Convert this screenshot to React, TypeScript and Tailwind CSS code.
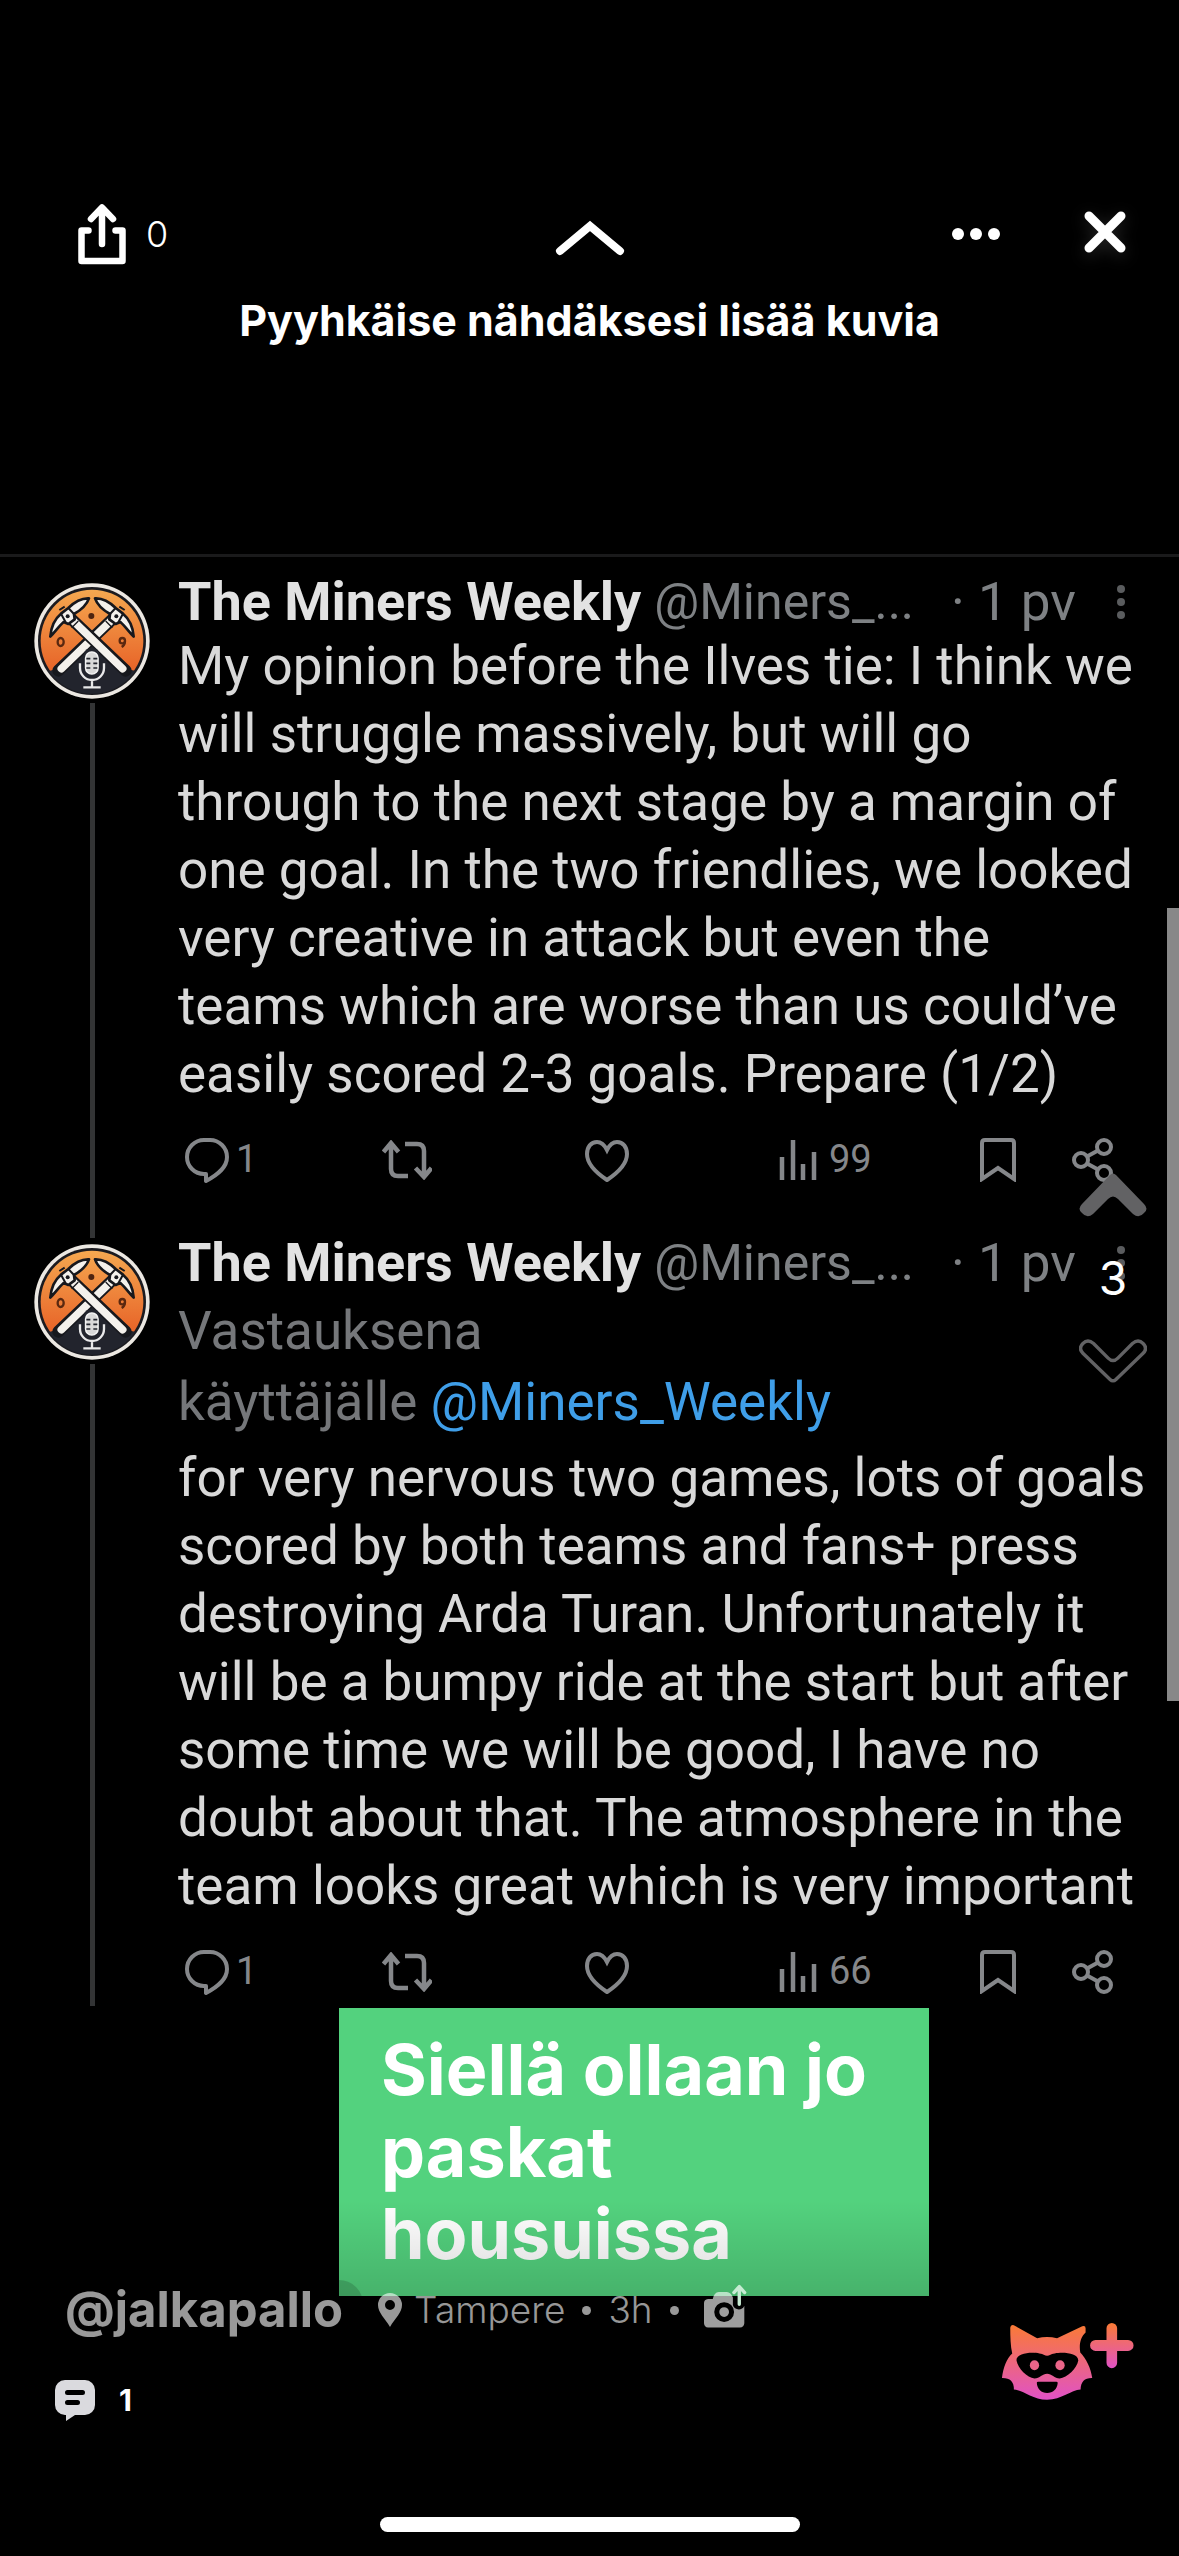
import { Fragment } from 'react';

type Tweet = {
  id: string;
  reply?: boolean;
  lines: string[];
  views: string;
};

const tweets: Tweet[] = [
  {
    id: 'one',
    lines: [
      'My opinion before the Ilves tie: I think we',
      'will struggle massively, but will go',
      'through to the next stage by a margin of',
      'one goal. In the two friendlies, we looked',
      'very creative in attack but even the',
      'teams which are worse than us could’ve',
      'easily scored 2-3 goals. Prepare (1/2)',
    ],
    views: '99',
  },
  {
    id: 'two',
    reply: true,
    lines: [
      'for very nervous two games, lots of goals',
      'scored by both teams and fans+ press',
      'destroying Arda Turan. Unfortunately it',
      'will be a bumpy ride at the start but after',
      'some time we will be good, I have no',
      'doubt about that. The atmosphere in the',
      'team looks great which is very important',
    ],
    views: '66',
  },
];

function Pickaxe() {
  return (
    <g>
      <path d="M152 142 L318 300" stroke="#17181d" strokeWidth="36" strokeLinecap="round" />
      <path d="M154 144 L309 294" stroke="#f4f1ec" strokeWidth="23" strokeLinecap="round" />
      <path d="M147 162l20-20M156 171l20-20" stroke="#17181d" strokeWidth="4" />
      <path
        d="M92 198C94 168 106 144 124 129L146 112C166 92 187 82 208 83C201 103 184 118 163 130L165 146L146 160L132 154C118 166 106 184 92 198Z"
        fill="#f4f1ec"
        stroke="#17181d"
        strokeWidth="8"
        strokeLinejoin="round"
      />
      <path d="M124 129l14 26M146 112l17 18M119 118l16-10" stroke="#17181d" strokeWidth="6" />
      <circle cx="144" cy="137" r="6" fill="#17181d" />
    </g>
  );
}

function Avatar({ id }: { id: string }) {
  const gradient = `sky-${id}`;
  const clip = `disc-${id}`;
  return (
    <svg viewBox="43 37 348 348" className="size-[116px]" fill="none" role="img" aria-label="The Miners Weekly">
      <defs>
        <linearGradient id={gradient} x1="0" y1="0" x2="0" y2="1">
          <stop offset="0" stopColor="#f5a850" />
          <stop offset="0.75" stopColor="#e8672a" />
        </linearGradient>
        <clipPath id={clip}>
          <circle cx="217" cy="211" r="158" />
        </clipPath>
      </defs>
      <circle cx="217" cy="211" r="173" fill="#ece8e2" />
      <circle cx="217" cy="211" r="162" fill="#1b1b20" />
      <g clipPath={`url(#${clip})`}>
        <circle cx="217" cy="211" r="154" fill={`url(#${gradient})`} />
        <path d="M50 310L100 298L217 200L335 298L390 310V390H50Z" fill="#22242d" />
        <g transform="translate(434 0) scale(-1 1)">
          <Pickaxe />
        </g>
        <Pickaxe />
        <circle cx="215" cy="136" r="9" fill="#4d2410" />
        <ellipse cx="123" cy="214" rx="9" ry="12" stroke="#5a2810" strokeWidth="7" />
        <circle cx="308" cy="210" r="8" stroke="#5a2810" strokeWidth="7" />
        <path d="M316 212q-1 12-10 17" stroke="#5a2810" strokeWidth="7" />
        <path d="M192 250a25 25 0 0 1 48 0v40a25 25 0 0 1-48 0z" fill="#22242d" />
        <rect x="198" y="244" width="37" height="66" rx="18" fill="#d9d9d9" stroke="#f2f2f2" strokeWidth="5" />
        <path d="M200 264h12M221 264h12M200 278h12M221 278h12M200 292h12M221 292h12" stroke="#22242d" strokeWidth="5" />
        <path d="M181 278v14a36 36 0 0 0 72 0v-14M217 328v20M191 350h52" stroke="#e9e9ea" strokeWidth="7" />
      </g>
    </svg>
  );
}

function Actions({ views }: { views: string }) {
  return (
    <div className="mt-[23px] grid h-[50px] grid-cols-[197fr_203fr_194fr_201fr_92fr_107fr] items-center pl-[7px] text-[38px] text-[#85878a]">
      <button type="button" aria-label="Vastaa" className="flex items-center gap-[7px]">
        <svg viewBox="0 0 44 50" className="h-[50px] w-11" fill="none" stroke="currentColor" strokeWidth="4">
          <path d="M19 5h6a17 17 0 0 1 17 17c0 10-8 17-21 24v-7h-2a17 17 0 0 1 0-34z" strokeLinejoin="round" />
        </svg>
        1
      </button>
      <button type="button" aria-label="Uudelleentwiittaa">
        <svg viewBox="0 0 50 40" className="h-10 w-[50px]" fill="none" stroke="currentColor" strokeWidth="4.500">
          <path d="M1.500 12l7.500-9 7.500 9M9 4v25q0 7 7 7h10M23 4h12q7 0 7 7v25M33.500 28l8.500 9 7.500-9" />
        </svg>
      </button>
      <button type="button" aria-label="Tykkää">
        <svg viewBox="0 0 44 44" className="size-11" fill="none" stroke="currentColor" strokeWidth="4">
          <path d="M22 12C19 6 15 4 12 4 6 4 2 9 2 16c0 10 8 18 20 26 12-8 20-16 20-26 0-7-4-12-10-12-3 0-7 2-10 8z" />
        </svg>
      </button>
      <button type="button" aria-label="Näyttökerrat" className="flex items-center gap-3">
        <svg viewBox="0 0 38 40" className="h-10 w-[38px]" fill="none" stroke="currentColor" strokeWidth="4.500">
          <path d="M3 17v23M14 0v40M24 24v16M35 12v28" />
        </svg>
        {views}
      </button>
      <button type="button" aria-label="Kirjanmerkki">
        <svg viewBox="0 0 36 44" className="h-11 w-9" fill="none" stroke="currentColor" strokeWidth="4">
          <path d="M2 5q0-3 3-3h26q3 0 3 3v36L18 30 2 41z" />
        </svg>
      </button>
      <button type="button" aria-label="Jaa">
        <svg viewBox="0 0 42 44" className="h-11 w-[42px]" fill="none" stroke="currentColor" strokeWidth="4">
          <circle cx="9" cy="22" r="7" />
          <circle cx="32" cy="9" r="7" />
          <circle cx="32" cy="35" r="7" />
          <path d="M15 18.500l11-6M15 25.500l11 6" />
        </svg>
      </button>
    </div>
  );
}

function TweetCard({ tweet }: { tweet: Tweet }) {
  return (
    <article className="flex">
      <div className="flex w-[178px] shrink-0 flex-col items-start pl-[34px]">
        <div className="flex w-[116px] flex-1 flex-col items-center">
          <div className="h-[26px]">{tweet.reply && <div className="h-5 w-[5px] bg-[#333435]" />}</div>
          <Avatar id={tweet.id} />
          <div className="mt-1 w-[5px] flex-1 bg-[#333435]" />
        </div>
      </div>
      <div className={tweet.reply ? 'min-w-0 flex-1 pt-[15px] pb-[13px]' : 'min-w-0 flex-1 pt-[15px] pb-[37px]'}>
        <header className="flex items-center pr-[53px] text-[53px] leading-[60px] whitespace-nowrap text-[#7e8184]">
          <h2 className="text-[54px] font-bold text-[#e2e2e2]">The Miners Weekly</h2>
          <span className="ml-[13px] text-[50px]">@Miners_...</span>
          <span className="ml-auto">· 1 pv</span>
          <button type="button" aria-label="Lisää" className="ml-10">
            <svg viewBox="0 0 10 36" className="h-9 w-[10px]" fill="#5a5c5e">
              <circle cx="5" cy="5" r="4" />
              <circle cx="5" cy="18" r="4" />
              <circle cx="5" cy="31" r="4" />
            </svg>
          </button>
        </header>
        {tweet.reply && (
          <p className="mt-[3px] mb-[6px] text-[53px] leading-[71px] text-[#75777a]">
            Vastauksena
            <br />
            käyttäjälle{' '}
            <a href="#miners" className="text-[#3f9ee8]">
              @Miners_Weekly
            </a>
          </p>
        )}
        <p className="text-[53px] leading-[68px] whitespace-nowrap text-[#d9d9d9]">
          {tweet.lines.map((line, i) => (
            <Fragment key={line}>
              {i > 0 && <br />}
              {line}
            </Fragment>
          ))}
        </p>
        <Actions views={tweet.views} />
      </div>
    </article>
  );
}

function TopBar() {
  return (
    <header className="pt-[202px] pb-[206px]">
      <div className="grid h-16 grid-cols-3 items-center">
        <button type="button" className="flex items-center gap-[19px] justify-self-start pl-[77px] text-4xl font-light">
          <svg viewBox="0 0 50 62" className="h-[62px] w-[50px]" fill="none" stroke="#fff" strokeWidth="6.500" strokeLinecap="round" strokeLinejoin="round">
            <path d="M11.500 27.500H4.500V58h41V27.500H38.500M25 41V6M14 16L25 4.500l11 11.500" />
          </svg>
          0
        </button>
        <button type="button" aria-label="Seuraava" className="justify-self-center pt-2">
          <svg viewBox="0 0 70 36" className="h-9 w-[70px]" fill="none" stroke="#fff" strokeWidth="8" strokeLinecap="round" strokeLinejoin="miter">
            <path d="M5 31L35 6l30 25" />
          </svg>
        </button>
        <div className="flex items-center justify-self-end pr-[52px]">
          <button type="button" aria-label="Lisää vaihtoehtoja">
            <svg viewBox="0 0 50 14" className="h-[14px] w-[50px]" fill="#fff">
              <circle cx="7" cy="7" r="6" />
              <circle cx="25" cy="7" r="6" />
              <circle cx="43" cy="7" r="6" />
            </svg>
          </button>
          <button type="button" aria-label="Sulje" className="ml-[82px] pb-1">
            <svg viewBox="0 0 44 44" className="size-11 drop-shadow-[0_4px_8px_rgba(255,255,255,0.15)]" fill="none" stroke="#fff" strokeWidth="9" strokeLinecap="round">
              <path d="M6 6l32 32M38 6L6 38" />
            </svg>
          </button>
        </div>
      </div>
      <p className="mt-[26px] text-center text-[43px] leading-[56px] font-bold">Pyyhkäise nähdäksesi lisää kuvia</p>
    </header>
  );
}

function VotePanel() {
  return (
    <aside className="absolute top-[1173px] right-8 flex w-[68px] flex-col items-center">
      <button type="button" aria-label="Ääni ylös">
        <svg viewBox="0 0 68 44" className="h-11 w-[68px]" fill="#626264">
          <path d="M31 2Q34-1 37 2L65 31Q70 36 65 40Q60 46 54 41L39 26Q34 21 29 26L14 41Q8 46 3 40Q-2 36 3 31Z" />
        </svg>
      </button>
      <span className="my-[31px] text-[46px] leading-[60px]">3</span>
      <button type="button" aria-label="Ääni alas">
        <svg viewBox="-1 0 70 44" className="h-11 w-[68px]" fill="none" stroke="#626264" strokeWidth="3.500">
          <path d="M31 41Q34 44 37 41L65 14Q70 9 65 4Q60-1 54 4L39 19Q34 24 29 19L14 4Q8-1 3 4Q-2 9 3 14Z" />
        </svg>
      </button>
    </aside>
  );
}

function RaccoonPlus() {
  return (
    <svg viewBox="124 96 402 238" className="h-[79px] w-[134px]">
      <defs>
        <linearGradient id="face" gradientUnits="userSpaceOnUse" x1="0" y1="105" x2="0" y2="330">
          <stop offset="0" stopColor="#fa7a36" />
          <stop offset="1" stopColor="#e052c6" />
        </linearGradient>
        <linearGradient id="plus" gradientUnits="userSpaceOnUse" x1="0" y1="100" x2="0" y2="236">
          <stop offset="0" stopColor="#fa7a36" />
          <stop offset="1" stopColor="#e052c6" />
        </linearGradient>
      </defs>
      <path
        fill="url(#face)"
        fillRule="evenodd"
        d="M151 113Q152 103 162 106L232 145Q262 138 292 145L368 109Q378 106 378 115V128C362 142 358 166 362 188C380 206 394 236 398 265Q364 264 363 299C334 300 306 330 262 330C218 330 192 301 162 299Q162 264 126 265C130 234 140 206 157 191C152 168 151 140 151 113ZM170 212C168 182 242 186 252 195Q262 201 272 195C282 186 356 182 356 212C352 236 322 264 300 266C284 266 276 252 262 252C248 252 240 266 224 266C202 264 174 236 170 212ZM231 279Q231 276 235 276H290Q294 276 294 280C292 299 280 310 262 310C245 310 232 298 231 279Z"
      />
      <ellipse cx="224" cy="226" rx="14" ry="15" fill="#eb6589" />
      <ellipse cx="301" cy="226" rx="14" ry="15" fill="#eb6589" />
      <path
        fill="url(#plus)"
        d="M441 115a16 16 0 0 1 32 0v35h33a16 16 0 0 1 0 33h-33v36a16 16 0 0 1-32 0v-36h-33a16 16 0 0 1 0-33h33z"
      />
    </svg>
  );
}

function Footer() {
  return (
    <footer className="relative -mt-4 flex items-start justify-between">
      <div>
        <div className="flex h-[60px] items-center">
          <a href="#jalkapallo" className="ml-[45px] rounded-3xl bg-black/15 px-5 text-[49px] leading-[60px] font-bold text-white/60">
            @jalkapallo
          </a>
          <span className="ml-[15px] flex items-center text-[37px] font-light text-white/60">
            <svg viewBox="0 0 24 34" className="mr-[12px] h-[34px] w-6" fill="currentColor" fillRule="evenodd">
              <path d="M12 0a12 12 0 0 1 12 12c0 8-7 13-12 22C7 25 0 20 0 12A12 12 0 0 1 12 0zM12 7a5 5 0 1 0 0 10a5 5 0 0 0 0-10z" />
            </svg>
            Tampere
            <span className="mx-[17px] size-[9px] rounded-full bg-white/60" />
            3h
            <span className="mx-[17px] size-[9px] rounded-full bg-white/60" />
          </span>
          <svg viewBox="186 42 128 130" className="ml-2 mb-2 h-[44px] w-[43px]">
            <path
              d="M186 98Q186 87 198 86H212Q216 66 230 65H254Q266 66 272 82V104C276 120 300 122 306 106V158Q305 170 293 171H198Q187 170 186 158Z"
              fill="#fff"
              fillOpacity="0.62"
            />
            <circle cx="246" cy="125" r="22" fill="none" stroke="#000" strokeWidth="15" />
            <path d="M291 102V54M275 67L291 49L307 67" fill="none" stroke="#c7ecd3" strokeWidth="10" strokeLinecap="round" strokeLinejoin="round" />
          </svg>
        </div>
        <button type="button" className="mt-9 ml-[55px] flex h-12 items-center gap-6 text-[30px] font-bold">
          <svg viewBox="0 0 40 41" className="h-[41px] w-10">
            <path d="M10 0h20a10 10 0 0 1 10 10v15a10 10 0 0 1-10 10H20l-9 6V35h-1A10 10 0 0 1 0 25V10A10 10 0 0 1 10 0z" fill="#dadade" />
            <path d="M12.500 12.500h15M12.500 22.500h10" stroke="#000" strokeWidth="5" strokeLinecap="round" />
          </svg>
          1
        </button>
      </div>
      <button type="button" aria-label="Lisää julkaisu" className="mt-[42px] mr-11">
        <RaccoonPlus />
      </button>
    </footer>
  );
}

export default function App() {
  return (
    <main className="relative flex min-h-screen flex-col bg-black font-['Inter',sans-serif] text-white">
      <TopBar />
      <section className="border-t-[3px] border-[#1a1a1b] font-['Roboto',sans-serif]">
        {tweets.map((tweet) => (
          <TweetCard key={tweet.id} tweet={tweet} />
        ))}
      </section>
      <div className="relative mt-[2px] ml-[339px] w-[590px] max-w-full bg-[#53d27e] px-[42px] py-[21px] text-[70px] leading-[82px] font-bold">
        Siellä ollaan jo
        <br />
        paskat
        <br />
        housuissa
        <div className="absolute inset-x-0 bottom-0 h-1/3 bg-linear-to-b from-black/0 to-black/15" />
      </div>
      <Footer />
      <VotePanel />
      <div className="absolute top-[908px] right-0 h-[793px] w-3 bg-[#888]" />
      <div className="mt-auto flex justify-center pb-6">
        <div className="h-[15px] w-[420px] rounded-full bg-white" />
      </div>
    </main>
  );
}
